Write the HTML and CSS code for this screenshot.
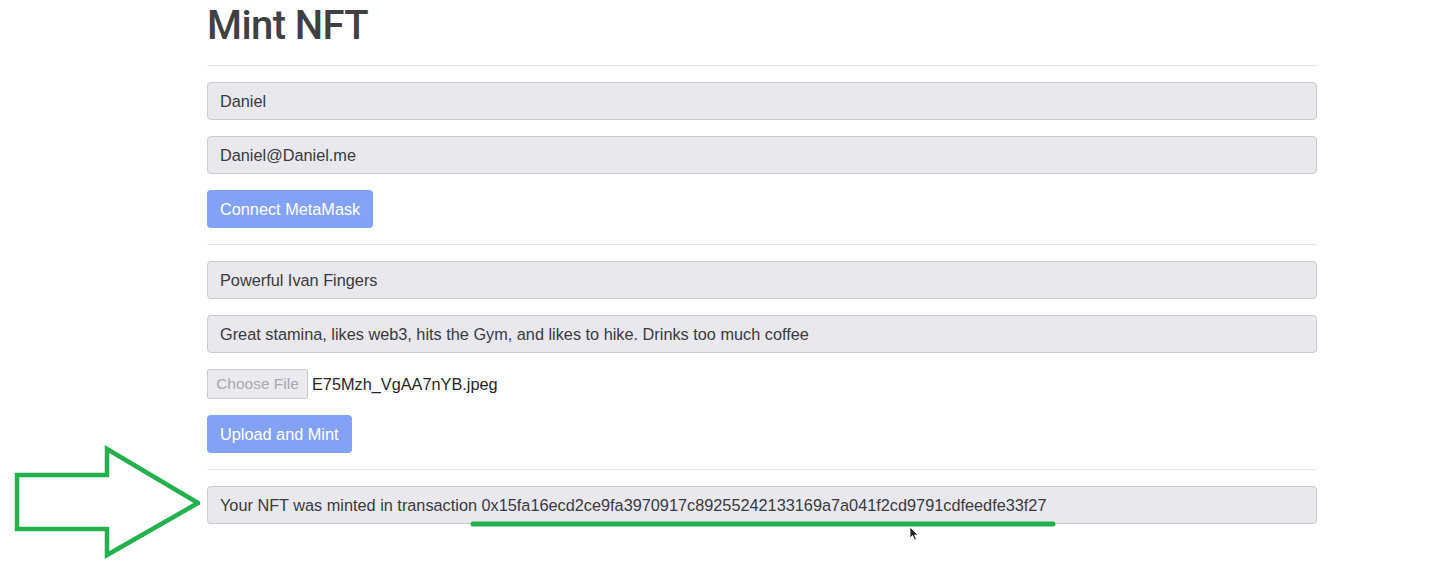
FILE: index.html
```html
<!DOCTYPE html>
<html lang="en">
<head>
<meta charset="utf-8">
<title>Mint NFT</title>
<link rel="stylesheet" href="styles.css">
</head>
<body>
<div class="container">
  <h1 class="title">Mint NFT</h1>
  <hr class="rule rule-first">
  <div class="field">Daniel</div>
  <div class="field">Daniel@Daniel.me</div>
  <button class="btn" type="button">Connect MetaMask</button>
  <hr class="rule">
  <div class="field">Powerful Ivan Fingers</div>
  <div class="field">Great stamina, likes web3, hits the Gym, and likes to hike. Drinks too much coffee</div>
  <div class="file-row"><span class="file-btn">Choose File</span><span class="file-name">E75Mzh_VgAA7nYB.jpeg</span></div>
  <button class="btn" type="button">Upload and Mint</button>
  <hr class="rule">
  <div class="field result">Your NFT was minted in transaction 0x15fa16ecd2ce9fa3970917c89255242133169a7a041f2cd9791cdfeedfe33f27</div>
</div>

<svg class="annot-arrow" width="200" height="120" viewBox="0 0 200 120" xmlns="http://www.w3.org/2000/svg">
  <polygon points="17,34 107,34 107,8 198,62 107,114 107,88 17,88" fill="none" stroke="#22b14c" stroke-width="4.5" stroke-linejoin="miter"/>
</svg>
<svg class="annot-line" width="590" height="10" viewBox="0 0 590 10" xmlns="http://www.w3.org/2000/svg">
  <line x1="4" y1="5" x2="584" y2="5" stroke="#22b14c" stroke-width="5" stroke-linecap="round"/>
</svg>
<svg class="cursor" width="12" height="16" viewBox="0 0 12 16" xmlns="http://www.w3.org/2000/svg">
  <path d="M1 1 L1 12 L3.6 9.6 L5.6 14 L7.4 13.2 L5.5 9 L9 9 Z" fill="#222" stroke="#fff" stroke-width="0.8"/>
</svg>
</body>
</html>
```

FILE: styles.css
```css
html, body {
  margin: 0;
  padding: 0;
  background: #ffffff;
}

body {
  font-family: "Liberation Sans", Arial, sans-serif;
  font-size: 16.3px;
  color: #3a3a3d;
  position: relative;
  min-height: 574px;
}

.container {
  width: 1110px;
  margin-left: 207px;
  padding-top: 2px;
}

.title {
  margin: 0;
  font-family: Roboto, "Liberation Sans", sans-serif;
  font-size: 40px;
  line-height: 48px;
  font-weight: 500;
  color: #3f3f44;
  letter-spacing: -0.6px;
}

.rule {
  border: 0;
  border-top: 1px solid #e6e6e8;
  margin: 16px 0;
  height: 0;
}

.rule-first {
  margin-top: 15px;
}

.field {
  box-sizing: border-box;
  height: 38px;
  padding: 1px 12px 0;
  display: flex;
  align-items: center;
  background: #e8e8ed;
  border: 1px solid #c9c9ce;
  border-radius: 4px;
  color: #3a3a3d;
  margin-bottom: 16px;
  white-space: nowrap;
  overflow: hidden;
}

.field.result {
  margin-bottom: 0;
}

.btn {
  display: block;
  box-sizing: border-box;
  height: 38px;
  padding: 1px 13px 0;
  border: 0;
  border-radius: 4px;
  background: #82a2f5;
  color: #ffffff;
  font-family: inherit;
  font-size: 16.3px;
  margin: 0;
}

.file-row {
  display: flex;
  align-items: center;
  height: 30px;
  margin-bottom: 16px;
}

.file-btn {
  box-sizing: border-box;
  height: 30px;
  width: 101px;
  display: flex;
  align-items: center;
  justify-content: center;
  background: #ebebef;
  border: 1px solid #c9c9ce;
  border-radius: 2px;
  color: #a8a8ad;
  font-size: 15.5px;
}

.file-name {
  margin-left: 4px;
  color: #262628;
}

.annot-arrow {
  position: absolute;
  left: 0;
  top: 441px;
}

.annot-line {
  position: absolute;
  left: 469px;
  top: 519px;
}

.cursor {
  position: absolute;
  left: 909px;
  top: 526px;
}
```
